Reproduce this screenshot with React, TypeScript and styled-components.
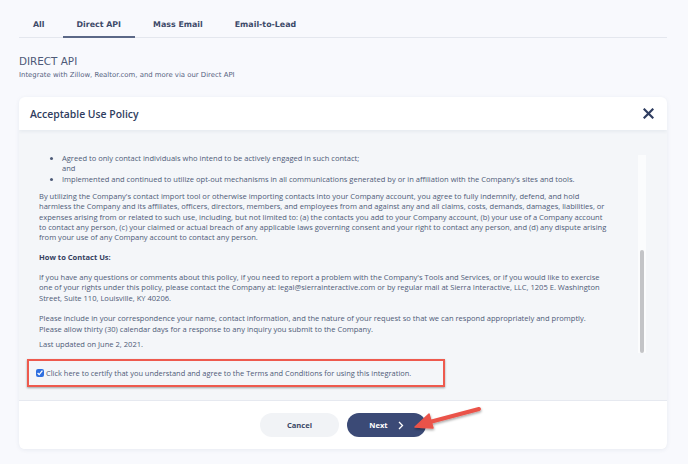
import { createGlobalStyle } from 'styled-components';
import styled from 'styled-components';

const GlobalStyle = createGlobalStyle`
  html, body {
    margin: 0;
    padding: 0;
    background: #f8f9fd;
  }
  body {
    font-family: 'Open Sans', 'Liberation Sans', sans-serif;
  }
`;

const Page = styled.div`
  position: relative;
  width: 688px;
  height: 464px;
  box-sizing: border-box;
  padding: 0 21px 0 19px;
  background: #f8f9fd;
  overflow: hidden;
`;

const Tabs = styled.nav`
  display: flex;
  gap: 4px;
  height: 37px;
  border-bottom: 1px solid #e4e7ee;
`;

const Tab = styled.div<{ $active?: boolean }>`
  display: flex;
  align-items: center;
  padding: 12px 14px 0;
  font-family: 'DejaVu Sans', Verdana, sans-serif;
  font-weight: bold;
  font-size: 7.9px;
  color: #3d4a69;
  border-bottom: 2px solid ${p => (p.$active ? '#5b6887' : 'transparent')};
  margin-bottom: -1px;
`;

const SectionTitle = styled.h2`
  margin: 16px 0 0;
  font-family: 'DejaVu Sans', Verdana, sans-serif;
  font-weight: normal;
  font-size: 10.4px;
  line-height: 14px;
  color: #4d5a78;
`;

const SectionSub = styled.p`
  margin: 3px 0 0;
  font-family: 'DejaVu Sans', Verdana, sans-serif;
  font-size: 6.9px;
  line-height: 9px;
  color: #566381;
`;

const Card = styled.section`
  margin-top: 17px;
  background: #fff;
  border-radius: 6px;
  box-shadow: 0 1px 4px rgba(40, 60, 100, 0.08);
  overflow: hidden;
`;

const CardHeader = styled.header`
  display: flex;
  align-items: center;
  justify-content: space-between;
  height: 33px;
  padding: 0 12px 0 11px;
  box-shadow: 0 2px 3px rgba(40, 60, 100, 0.06);
  position: relative;
`;

const CardTitle = styled.h3`
  margin: 0;
  font-size: 10.4px;
  font-weight: 600;
  color: #2f3d60;
`;

const CloseButton = styled.button`
  border: 0;
  padding: 0;
  background: none;
  display: flex;
  width: 14px;
  height: 14px;
  align-items: center;
  justify-content: center;
`;

const CardBody = styled.div`
  background: #f4f6f9;
  height: 271px;
  padding: 22px 21px 0 20px;
  box-sizing: border-box;
  display: flex;
  flex-direction: column;
`;

const Scroller = styled.div`
  display: flex;
  height: 201px;
`;

const Content = styled.div`
  flex: 1;
  overflow: hidden;
  font-size: 7.55px;
  line-height: 10.35px;
  color: #4e5b78;
  white-space: nowrap;
  padding-top: 1px;
`;

const Track = styled.div`
  width: 8px;
  margin-top: 3px;
  background: #fbfcfd;
  display: flex;
  flex-direction: column;
  justify-content: flex-end;
  align-items: center;
`;

const Thumb = styled.div`
  width: 4px;
  height: 52%;
  border-radius: 2px;
  background: #c3c4c7;
`;

const Bullets = styled.ul`
  margin: 0;
  padding-left: 23px;
`;

const Para = styled.p<{ $top?: number }>`
  margin: ${p => p.$top ?? 0}px 0 0;
`;

const Heading = styled.p`
  margin: 9px 0 0;
  font-weight: 700;
  color: #34415f;
`;

const ConsentBox = styled.label`
  display: flex;
  align-items: center;
  gap: 2px;
  margin: 6px 0 0 -12px;
  width: 418px;
  height: 28px;
  box-sizing: border-box;
  padding-left: 7px;
  border: 2px solid #ee5a4e;
  box-shadow: 0 1px 2px rgba(0, 0, 0, 0.35);
  font-size: 7.45px;
  color: #4e5b78;
  white-space: nowrap;
`;

const Check = styled.input`
  width: 8px;
  height: 8px;
  margin: 0;
  accent-color: #2f6fe0;
`;

const CardFooter = styled.footer`
  display: flex;
  justify-content: center;
  align-items: center;
  gap: 8px;
  height: 48px;
  background: #fff;
  box-shadow: 0 -1px 0 #e6e9f0;
`;

const Button = styled.button<{ $primary?: boolean }>`
  display: flex;
  align-items: center;
  justify-content: center;
  gap: 10px;
  width: 79px;
  height: 24px;
  border: 0;
  border-radius: 12px;
  font-family: 'Open Sans', sans-serif;
  font-weight: 700;
  font-size: 7.6px;
  background: ${p => (p.$primary ? '#3b4a76' : '#f1f3f6')};
  color: ${p => (p.$primary ? '#ffffff' : '#3b4866')};
`;

const Annotation = styled.svg`
  position: absolute;
  left: 400px;
  top: 398px;
  overflow: visible;
`;

export default function App() {
  return (
    <>
      <GlobalStyle />
      <Page>
        <Tabs>
          <Tab>All</Tab>
          <Tab $active>Direct API</Tab>
          <Tab>Mass Email</Tab>
          <Tab>Email-to-Lead</Tab>
        </Tabs>
        <SectionTitle>DIRECT API</SectionTitle>
        <SectionSub>Integrate with Zillow, Realtor.com, and more via our Direct API</SectionSub>
        <Card>
          <CardHeader>
            <CardTitle>Acceptable Use Policy</CardTitle>
            <CloseButton aria-label="Close">
              <svg width="11" height="11" viewBox="0 0 11 11">
                <path d="M1.5 1.5 L9.5 9.5 M9.5 1.5 L1.5 9.5" stroke="#2f3d60" strokeWidth="2.2" strokeLinecap="square" />
              </svg>
            </CloseButton>
          </CardHeader>
          <CardBody>
            <Scroller>
              <Content>
                <Bullets>
                  <li>
                    Agreed to only contact individuals who intend to be actively engaged in such contact;
                    <br />
                    and
                  </li>
                  <li>
                    Implemented and continued to utilize opt-out mechanisms in all communications generated by or in affiliation with the Company's sites and tools.
                  </li>
                </Bullets>
                <Para $top={7}>
                  By utilizing the Company's contact import tool or otherwise importing contacts into your Company account, you agree to fully indemnify, defend, and hold
                  <br />
                  harmless the Company and its affiliates, officers, directors, members, and employees from and against any and all claims, costs, demands, damages, liabilities, or
                  <br />
                  expenses arising from or related to such use, including, but not limited to: (a) the contacts you add to your Company account, (b) your use of a Company account
                  <br />
                  to contact any person, (c) your claimed or actual breach of any applicable laws governing consent and your right to contact any person, and (d) any dispute arising
                  <br />
                  from your use of any Company account to contact any person.
                </Para>
                <Heading>How to Contact Us:</Heading>
                <Para $top={10}>
                  If you have any questions or comments about this policy, if you need to report a problem with the Company's Tools and Services, or if you would like to exercise
                  <br />
                  one of your rights under this policy, please contact the Company at: legal@sierrainteractive.com or by regular mail at Sierra Interactive, LLC, 1205 E. Washington
                  <br />
                  Street, Suite 110, Louisville, KY 40206.
                  <br />
                  <br />
                  Please include in your correspondence your name, contact information, and the nature of your request so that we can respond appropriately and promptly.
                  <br />
                  Please allow thirty (30) calendar days for a response to any inquiry you submit to the Company.
                </Para>
                <Para $top={5}>Last updated on June 2, 2021.</Para>
              </Content>
              <Track>
                <Thumb />
              </Track>
            </Scroller>
            <ConsentBox>
              <Check type="checkbox" defaultChecked />
              Click here to certify that you understand and agree to the Terms and Conditions for using this integration.
            </ConsentBox>
          </CardBody>
          <CardFooter>
            <Button>Cancel</Button>
            <Button $primary>
              Next
              <svg width="6" height="9" viewBox="0 0 6 9">
                <path d="M1 1 L4.5 4.5 L1 8" stroke="#fff" strokeWidth="1.3" fill="none" />
              </svg>
            </Button>
          </CardFooter>
        </Card>
        <Annotation width="90" height="40" viewBox="0 0 90 40">
          <defs>
            <filter id="sh" x="-20%" y="-50%" width="140%" height="200%">
              <feDropShadow dx="0.5" dy="1.5" stdDeviation="1" floodColor="#000" floodOpacity="0.35" />
            </filter>
          </defs>
          <g filter="url(#sh)" fill="#ea5349" stroke="#ea5349">
            <path d="M79 11 L26 25" strokeWidth="4" strokeLinecap="round" fill="none" />
            <path d="M15 29 L29 16 L33 30 Z" strokeWidth="1.5" strokeLinejoin="round" />
          </g>
        </Annotation>
      </Page>
    </>
  );
}
